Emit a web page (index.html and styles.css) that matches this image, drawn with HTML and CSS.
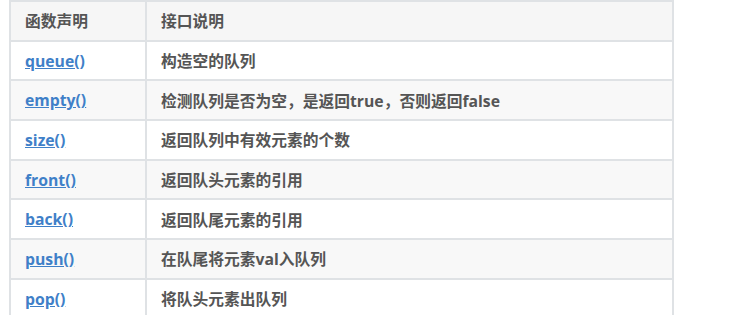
FILE: index.html
```html
<!DOCTYPE html>
<html lang="zh">
<head>
<meta charset="utf-8">
<link rel="stylesheet" href="styles.css">
</head>
<body>
<table class="api">
  <thead>
    <tr><th class="c1">函数声明</th><th>接口说明</th></tr>
  </thead>
  <tbody>
    <tr><td><a href="#">queue()</a></td><td>构造空的队列</td></tr>
    <tr><td><a href="#">empty()</a></td><td>检测队列是否为空，是返回true，否则返回false</td></tr>
    <tr><td><a href="#">size()</a></td><td>返回队列中有效元素的个数</td></tr>
    <tr><td><a href="#">front()</a></td><td>返回队头元素的引用</td></tr>
    <tr><td><a href="#">back()</a></td><td>返回队尾元素的引用</td></tr>
    <tr><td><a href="#">push()</a></td><td>在队尾将元素val入队列</td></tr>
    <tr><td><a href="#">pop()</a></td><td>将队头元素出队列</td></tr>
  </tbody>
</table>
</body>
</html>
```
FILE: styles.css
```css
html, body {
  margin: 0;
  padding: 0;
  background: #ffffff;
}
body {
  padding-left: 9px;
  font-family: "Open Sans", "Noto Sans CJK SC", sans-serif;
  font-size: 15.75px;
  font-weight: 700;
  color: #555555;
}
.api {
  border-collapse: collapse;
  width: 665px;
}
.api th, .api td {
  border: 2px solid #dfe2e5;
  padding: 0 14px;
  height: 39.7px;
  box-sizing: border-box;
  text-align: left;
  vertical-align: middle;
  font-weight: 700;
  white-space: nowrap;
}
.api .c1 {
  width: 136px;
}
.api thead tr {
  background: #f6f6f6;
}
.api tbody tr:nth-child(even) {
  background: #f8f8f8;
}
.api a {
  color: #3f80c8;
  text-decoration: underline;
}
```
